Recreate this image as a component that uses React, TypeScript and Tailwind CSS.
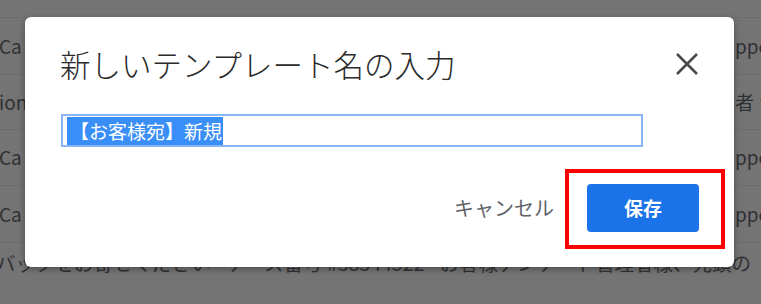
import React from "react";

const jp = { fontFamily: '"Noto Sans CJK JP", "Noto Sans", sans-serif' };

function Row({ left, right, h = "h-[55px]" }: { left: string; right: string; h?: string }) {
  return (
    <div className={`flex items-center justify-between border-b border-[#6c6c6c] ${h}`}>
      <span className="text-[19px] text-[#2f3033] -ml-[1px]">{left}</span>
      <span className="text-[19px] text-[#2f3033] w-[26px] overflow-hidden whitespace-nowrap">{right}</span>
    </div>
  );
}

export default function App() {
  return (
    <div className="relative w-[761px] h-[304px] overflow-hidden bg-[#747474]" style={jp}>
      {/* background page, dimmed */}
      <div className="flex flex-col">
        <div className="h-[18px] border-b border-[#6c6c6c]" />
        <Row left="Ca" right="ppo" h="h-[57px]" />
        <Row left="ion" right="者 シ" />
        <Row left="Ca" right="ppo" h="h-[56px]" />
        <Row left="Ca" right="ppo" h="h-[57px]" />
        <div className="h-[40px] flex items-center whitespace-nowrap text-[19.5px] text-[#303134] -ml-[4px]">
          バックをお寄せください - ケース番号 #38344522 - お客様アンケート管理者様、先頭の
        </div>
      </div>

      {/* dialog */}
      <div className="absolute left-[25px] top-[17px] w-[709px] h-[250px] bg-white rounded-[6px] shadow-[0_2px_6px_rgba(0,0,0,0.35)] pl-[35px] pr-[35px] pt-[29px] flex flex-col">
        <div className="flex items-center justify-between h-[36px]">
          <span className="text-[30.5px] leading-[36px] text-[#2a2a2a] font-light">新しいテンプレート名の入力</span>
          <svg width="24" height="24" viewBox="0 0 24 24">
            <path d="M2 2 L22 22 M22 2 L2 22" stroke="#4a4a4a" strokeWidth="2.6" strokeLinecap="butt" />
          </svg>
        </div>
        <div className="mt-[32px] ml-[1px] w-[582px] h-[33px] border-2 border-[#8ab4f8] flex items-center pl-[4px]">
          <span className="bg-[#3a8ef8] text-white text-[19px] leading-[28px] h-[28px] pl-[3px] pr-[1px] whitespace-nowrap">【お客様宛】新規</span>
        </div>
        <div className="mt-[37px] flex items-center justify-end">
          <span className="text-[20px] text-[#5f6368] mr-[33px]">キャンセル</span>
          <button className="w-[112px] h-[48px] rounded-[4px] bg-[#1a73e8] text-white text-[19px] font-bold">保存</button>
        </div>
      </div>

      {/* highlight box */}
      <div className="absolute left-[565px] top-[169px] w-[160px] h-[80px] border-4 border-[#ff0000]" />
    </div>
  );
}
